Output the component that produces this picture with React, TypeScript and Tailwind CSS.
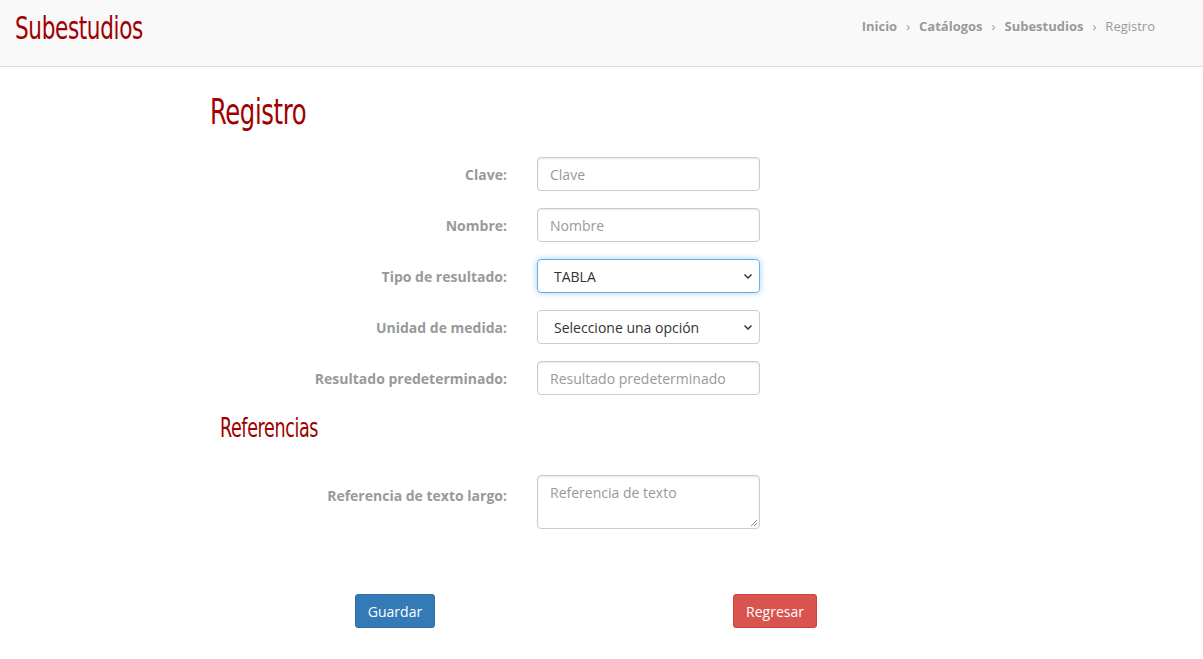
const head = { fontFamily: '"DejaVu Sans Condensed", "DejaVu Sans", sans-serif', fontStretch: 'condensed' } as const

const fields = [
  { label: 'Clave:', kind: 'input', ph: 'Clave' },
  { label: 'Nombre:', kind: 'input', ph: 'Nombre' },
  { label: 'Tipo de resultado:', kind: 'select', value: 'TABLA', focus: true },
  { label: 'Unidad de medida:', kind: 'select', value: 'Seleccione una opción' },
  { label: 'Resultado predeterminado:', kind: 'input', ph: 'Resultado predeterminado' },
]

const Chevron = () => (
  <svg width="10" height="10" viewBox="0 0 10 10" className="text-[#333]">
    <path d="M1.5 3.5 L5 7 L8.5 3.5" fill="none" stroke="currentColor" strokeWidth="1.5" />
  </svg>
)

const Row = ({ label, children }: { label: string; children: React.ReactNode }) => (
  <div className="flex items-center">
    <label className="w-[507px] pr-0 text-right text-[14px] font-bold text-[#999]">{label}</label>
    <div className="ml-[30px]">{children}</div>
  </div>
)

export default function App() {
  return (
    <div className="min-h-[659px] bg-white" style={{ fontFamily: '"Open Sans", sans-serif' }}>
      <div className="h-[67px] bg-[#f9f9f9] border-b border-[#ddd] flex items-center justify-between px-[15px]">
        <h1 className="text-[32px] text-[#a00000] -mt-[10px] leading-none tracking-[-0.5px] origin-left scale-x-[0.75]" style={head}>Subestudios</h1>
        <nav className="text-[13px] text-[#999] flex items-center gap-[9px] pr-[33px] -mt-[13px]">
          <span className="font-bold">Inicio</span><span>›</span>
          <span className="font-bold">Catálogos</span><span>›</span>
          <span className="font-bold">Subestudios</span><span>›</span>
          <span>Registro</span>
        </nav>
      </div>
      <h2 className="ml-[210px] mt-[27px] text-[36px] leading-none text-[#a00000] tracking-[-0.5px] origin-left scale-x-[0.75]" style={head}>Registro</h2>
      <div className="mt-[27px] flex flex-col gap-[17px]">
        {fields.map((f) => (
          <Row key={f.label} label={f.label}>
            {f.kind === 'input' ? (
              <div className="w-[223px] h-[34px] rounded-[4px] border border-[#ccc] shadow-[inset_0_1px_2px_rgba(0,0,0,0.1)] flex items-center px-[12px] text-[14px] text-[#999]">{f.ph}</div>
            ) : (
              <div className={`w-[223px] h-[34px] rounded-[4px] border flex items-center justify-between pl-[16px] pr-[6px] text-[14px] text-[#333] ${f.focus ? 'border-[#66afe9] shadow-[0_0_6px_rgba(102,175,233,0.6)]' : 'border-[#ccc]'}`}>
                <span>{f.value}</span><Chevron />
              </div>
            )}
          </Row>
        ))}
      </div>
      <h3 className="ml-[220px] mt-[20px] text-[26px] leading-none text-[#a00000] tracking-[-0.5px] origin-left scale-x-[0.75]" style={head}>Referencias</h3>
      <div className="mt-[34px]">
        <div className="flex items-start">
          <label className="w-[507px] text-right text-[14px] font-bold text-[#999] mt-[10px]">Referencia de texto largo:</label>
          <div className="ml-[30px] relative w-[223px] h-[54px] rounded-[4px] border border-[#ccc] shadow-[inset_0_1px_2px_rgba(0,0,0,0.1)] px-[12px] pt-[6px] text-[14px] text-[#999]">
            Referencia de texto
            <svg className="absolute right-[1px] bottom-[1px]" width="8" height="8" viewBox="0 0 8 8"><path d="M7 1 L1 7 M7 4 L4 7" stroke="#888" strokeWidth="1" /></svg>
          </div>
        </div>
      </div>
      <div className="mt-[65px] flex">
        <button className="ml-[355px] w-[80px] h-[34px] rounded-[3px] bg-[#337ab7] border border-[#2e6da4] text-white text-[14px]">Guardar</button>
        <button className="ml-[298px] w-[84px] h-[34px] rounded-[3px] bg-[#d9534f] border border-[#d43f3a] text-white text-[14px]">Regresar</button>
      </div>
    </div>
  )
}
